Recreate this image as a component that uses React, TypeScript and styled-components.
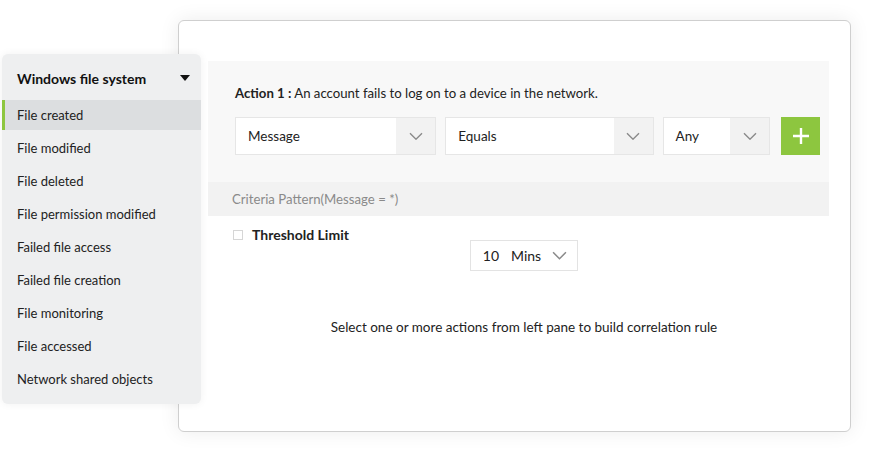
import * as React from 'react';
import styled, { createGlobalStyle } from 'styled-components';

const GlobalStyle = createGlobalStyle`
  html, body {
    margin: 0;
    padding: 0;
    background: #ffffff;
  }
  body {
    font-family: Lato, 'Open Sans', sans-serif;
    color: #222222;
  }
`;

const actions = [
  'File created',
  'File modified',
  'File deleted',
  'File permission modified',
  'Failed file access',
  'Failed file creation',
  'File monitoring',
  'File accessed',
  'Network shared objects',
];

const Chevron: React.FC<{ size?: number }> = ({ size = 14 }) => (
  <svg width={size} height={size * 0.6} viewBox="0 0 14 8" fill="none">
    <path d="M1 1l6 6 6-6" stroke="#8a8a8a" strokeWidth="1.4" />
  </svg>
);

const Select: React.FC<{ label: string; width: number; buttonWidth?: number }> = ({
  label,
  width,
  buttonWidth = 39,
}) => (
  <SelectBox style={{ width }}>
    <SelectLabel>{label}</SelectLabel>
    <SelectButton $width={buttonWidth}>
      <Chevron />
    </SelectButton>
  </SelectBox>
);

export default function App() {
  return (
    <Stage>
      <GlobalStyle />
      <Card>
        <ActionPanel>
          <ActionTitle>
            <strong>Action 1 :</strong> An account fails to log on to a device in the network.
          </ActionTitle>
          <Controls>
            <Select label="Message" width={202} />
            <Select label="Equals" width={209} />
            <Select label="Any" width={108} />
            <AddButton>
              <svg width="18" height="18" viewBox="0 0 18 18">
                <path d="M9 1v16M1 9h16" stroke="#ffffff" strokeWidth="2.4" />
              </svg>
            </AddButton>
          </Controls>
        </ActionPanel>
        <Criteria>Criteria Pattern(Message = *)</Criteria>
        <Threshold>
          <Checkbox />
          <ThresholdLabel>Threshold Limit</ThresholdLabel>
        </Threshold>
        <Lower>
          <TimeSelect>
            <TimeValue>10</TimeValue>
            <TimeUnit>Mins</TimeUnit>
            <Chevron size={15} />
          </TimeSelect>
          <Hint>Select one or more actions from left pane to build correlation rule</Hint>
        </Lower>
      </Card>
      <Sidebar>
        <SidebarHeader>
          <span>Windows file system</span>
          <Caret />
        </SidebarHeader>
        {actions.map((a, i) => (
          <SidebarItem key={a} $active={i === 0}>
            {a}
          </SidebarItem>
        ))}
      </Sidebar>
    </Stage>
  );
}

const Stage = styled.div`
  position: relative;
  width: 871px;
  height: 452px;
  padding: 20px 0 0 178px;
  box-sizing: border-box;
`;

const Card = styled.div`
  width: 673px;
  height: 412px;
  box-sizing: border-box;
  border: 1px solid #cfcfcf;
  border-radius: 6px;
  background: #ffffff;
  box-shadow: 0 0 20px rgba(0, 0, 0, 0.08);
  padding: 40px 21px 0 29px;
  display: flex;
  flex-direction: column;
`;

const ActionPanel = styled.div`
  background: #f8f8f8;
  padding: 24px 9px 27px 27px;
`;

const ActionTitle = styled.div`
  font-size: 13.2px;
  line-height: 16px;
  color: #222222;
  strong {
    font-weight: 700;
  }
`;

const Controls = styled.div`
  display: flex;
  align-items: center;
  gap: 9px;
  margin-top: 16px;
`;

const SelectBox = styled.div`
  height: 38px;
  box-sizing: border-box;
  border: 1px solid #e6e6e6;
  background: #ffffff;
  display: flex;
  align-items: stretch;
`;

const SelectLabel = styled.div`
  flex: 1;
  display: flex;
  align-items: center;
  padding-left: 12px;
  font-size: 13.5px;
  color: #222222;
`;

const SelectButton = styled.div<{ $width: number }>`
  width: ${p => p.$width}px;
  background: #f2f2f2;
  display: flex;
  align-items: center;
  justify-content: center;
`;

const AddButton = styled.div`
  width: 39px;
  height: 38px;
  margin-left: 2px;
  background: #8dc63f;
  display: flex;
  align-items: center;
  justify-content: center;
`;

const Criteria = styled.div`
  background: #f2f2f2;
  height: 34px;
  display: flex;
  align-items: center;
  padding-left: 24px;
  font-size: 13.2px;
  color: #8a8a8a;
`;

const Threshold = styled.div`
  display: flex;
  align-items: center;
  height: 11px;
  padding: 13px 0 0 25px;
`;

const Checkbox = styled.div`
  width: 8px;
  height: 8px;
  border: 1px solid #d6d6d6;
  background: #ffffff;
`;

const ThresholdLabel = styled.span`
  margin-left: 9px;
  font-size: 14px;
  font-weight: 700;
  color: #222222;
`;

const Lower = styled.div`
  display: flex;
  flex-direction: column;
  align-items: center;
  padding-left: 11px;
`;

const TimeSelect = styled.div`
  height: 31px;
  box-sizing: border-box;
  border: 1px solid #e3e3e3;
  padding: 0 10px 0 12px;
  display: flex;
  align-items: center;
  font-size: 14px;
  color: #222222;
`;

const TimeValue = styled.span`
  margin-right: 12px;
`;

const TimeUnit = styled.span`
  margin-right: 11px;
`;

const Hint = styled.div`
  margin-top: 48px;
  text-align: center;
  font-size: 13.5px;
  color: #222222;
`;

const Sidebar = styled.div`
  position: absolute;
  left: 2px;
  top: 54px;
  width: 199px;
  height: 350px;
  background: #eeeff0;
  border-radius: 6px;
  box-shadow: 0 0 8px rgba(0, 0, 0, 0.06);
  padding-top: 3px;
  box-sizing: border-box;
`;

const SidebarHeader = styled.div`
  height: 42px;
  margin-bottom: 1px;
  display: flex;
  align-items: center;
  justify-content: space-between;
  padding: 0 11px 0 15px;
  font-size: 14px;
  font-weight: 700;
  color: #111111;
`;

const Caret = styled.span`
  width: 0;
  height: 0;
  border-left: 5px solid transparent;
  border-right: 5px solid transparent;
  border-top: 6px solid #111111;
`;

const SidebarItem = styled.div<{ $active?: boolean }>`
  height: 30px;
  margin-bottom: 3px;
  display: flex;
  align-items: center;
  padding-left: 12px;
  font-size: 13px;
  color: #222222;
  background: ${p => (p.$active ? '#dcdee0' : 'transparent')};
  border-left: 3px solid ${p => (p.$active ? '#8dc63f' : 'transparent')};
  box-sizing: border-box;
`;
